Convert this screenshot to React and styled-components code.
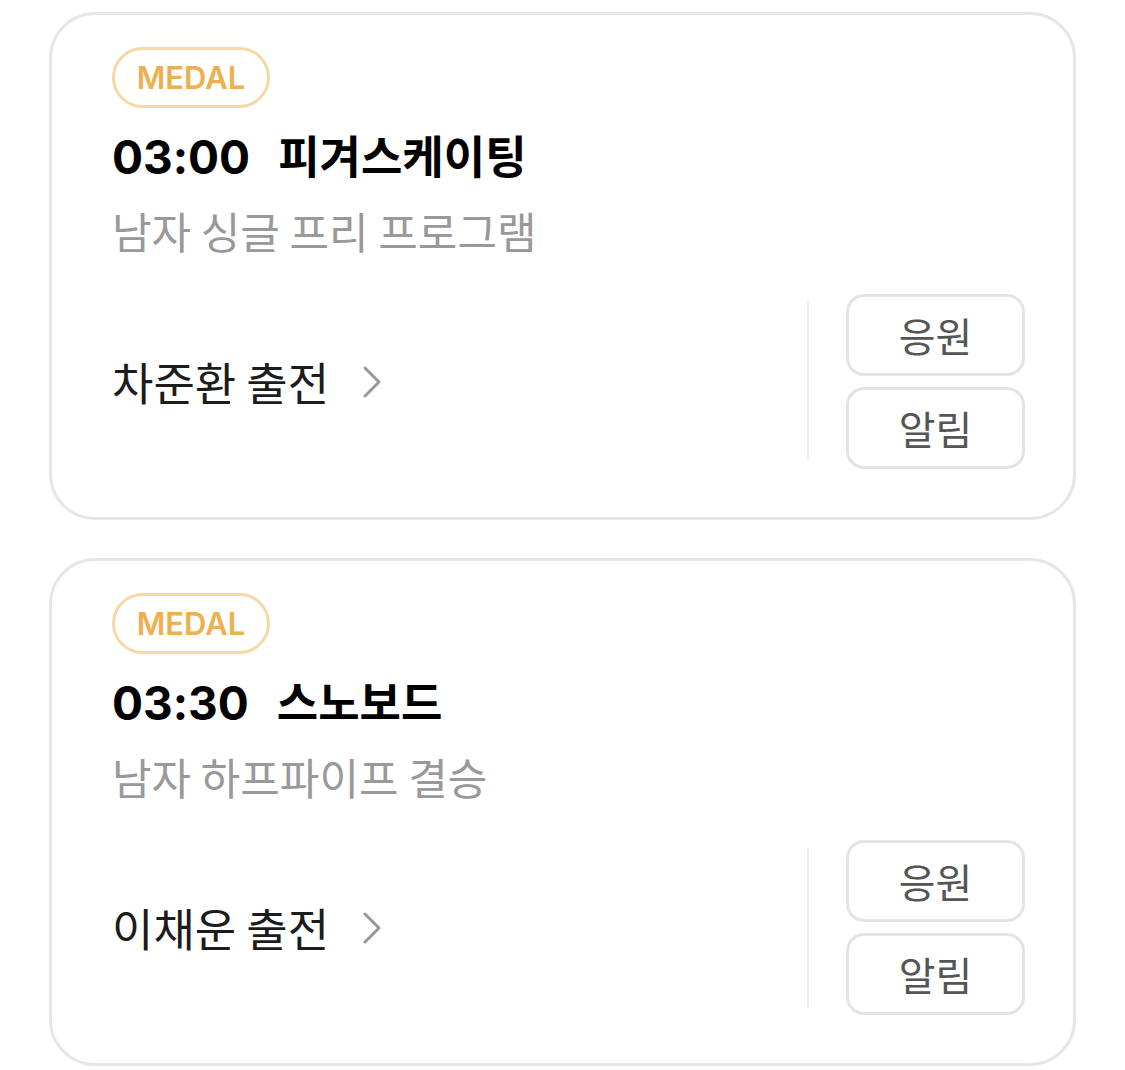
import React from "react";
import styled, { createGlobalStyle } from "styled-components";

const GlobalStyle = createGlobalStyle`
  body {
    margin: 0;
    background: #ffffff;
    font-family: "Noto Sans CJK KR", "Noto Sans", sans-serif;
  }
`;

const List = styled.div`
  display: flex;
  flex-direction: column;
  gap: 38px;
  padding: 12px 49px 0 49px;
`;

const Card = styled.div`
  box-sizing: border-box;
  width: 1027px;
  height: 508px;
  border: 3px solid #e6e6e6;
  border-radius: 46px;
  padding: 32px 48px 48px 60px;
  display: flex;
  flex-direction: column;
`;

const Badge = styled.span`
  box-sizing: border-box;
  align-self: flex-start;
  height: 61px;
  width: 158px;
  border: 3px solid #f5d9a2;
  border-radius: 31px;
  color: #edb04e;
  font-family: Inter, "Noto Sans", sans-serif;
  font-size: 31px;
  font-weight: 600;
  display: flex;
  align-items: center;
  justify-content: center;
`;

const Title = styled.div`
  margin-top: 16px;
  font-size: 45px;
  font-weight: 700;
  line-height: 62px;
  height: 62px;
  color: #000;
  white-space: nowrap;
`;

const Time = styled.span`
  font-family: Inter, "Noto Sans", sans-serif;
  font-size: 46px;
  margin-right: 28px;
`;

const Sub = styled.div`
  margin-top: 18px;
  font-size: 43px;
  line-height: 52px;
  color: #999999;
`;

const Bottom = styled.div`
  margin-top: auto;
  display: flex;
  align-items: center;
`;

const Athlete = styled.div`
  flex: 1;
  display: flex;
  align-items: center;
  gap: 33px;
  font-size: 45px;
  color: #1c1c1c;
`;

const Divider = styled.div`
  width: 2px;
  height: 159px;
  background: #eeeeee;
  margin-right: 37px;
`;

const Buttons = styled.div`
  display: flex;
  flex-direction: column;
  gap: 11px;
`;

const Button = styled.button`
  box-sizing: border-box;
  width: 179px;
  height: 82px;
  border: 3px solid #e4e4e4;
  border-radius: 18px;
  background: #fff;
  color: #555555;
  font-family: inherit;
  font-size: 40px;
  padding: 0;
  cursor: pointer;
`;

const Chevron = () => (
  <svg width="20" height="32" viewBox="0 0 20 32" fill="none">
    <path d="M3 2 L17 16 L3 30" stroke="#999" strokeWidth="3" strokeLinecap="round" strokeLinejoin="round" />
  </svg>
);

const events = [
  { time: "03:00", sport: "피겨스케이팅", detail: "남자 싱글 프리 프로그램", athlete: "차준환 출전" },
  { time: "03:30", sport: "스노보드", detail: "남자 하프파이프 결승", athlete: "이채운 출전" },
];

export default function App() {
  return (
    <>
      <GlobalStyle />
      <List>
        {events.map((e) => (
          <Card key={e.time}>
            <Badge>MEDAL</Badge>
            <Title>
              <Time>{e.time}</Time>
              <span>{e.sport}</span>
            </Title>
            <Sub>{e.detail}</Sub>
            <Bottom>
              <Athlete>
                <span>{e.athlete}</span>
                <Chevron />
              </Athlete>
              <Divider />
              <Buttons>
                <Button>응원</Button>
                <Button>알림</Button>
              </Buttons>
            </Bottom>
          </Card>
        ))}
      </List>
    </>
  );
}
